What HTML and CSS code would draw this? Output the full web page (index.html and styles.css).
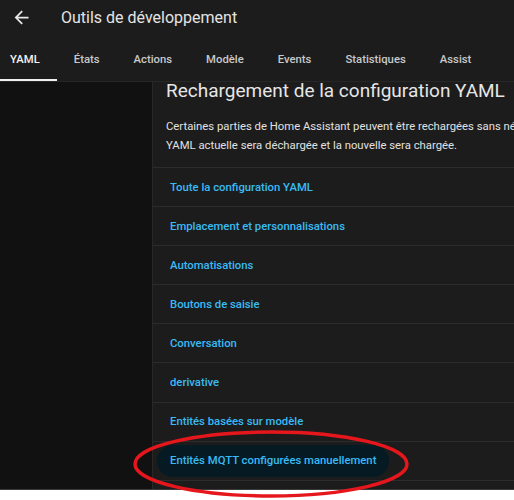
FILE: index.html
```html
<!DOCTYPE html>
<html lang="fr">
<head>
<meta charset="utf-8">
<title>Outils de développement</title>
<link rel="stylesheet" href="styles.css">
</head>
<body>
<div class="app">
  <header class="header">
    <div class="toolbar">
      <svg class="back" viewBox="0 0 24 24" width="21" height="21"><path fill="#e8e8e8" d="M20,11V13H8L13.5,18.5L12.08,19.92L4.16,12L12.08,4.08L13.5,5.5L8,11H20Z"/></svg>
      <div class="title">Outils de développement</div>
    </div>
    <nav class="tabs">
      <div class="tab active">YAML</div>
      <div class="tab">États</div>
      <div class="tab">Actions</div>
      <div class="tab">Modèle</div>
      <div class="tab">Events</div>
      <div class="tab">Statistiques</div>
      <div class="tab">Assist</div>
    </nav>
  </header>
  <div class="main">
    <aside class="side"></aside>
    <section class="card">
      <div class="card-head">
        <h1 class="heading">Rechargement de la configuration YAML</h1>
        <p class="desc"><span class="line">Certaines parties de Home Assistant peuvent être rechargées sans nécessiter de redémarrage. Cliquer sur recharger : la configuration</span><span class="line">YAML actuelle sera déchargée et la nouvelle sera chargée.</span></p>
      </div>
      <div class="row"><span class="btn">Toute la configuration YAML</span></div>
      <div class="row"><span class="btn">Emplacement et personnalisations</span></div>
      <div class="row"><span class="btn">Automatisations</span></div>
      <div class="row"><span class="btn">Boutons de saisie</span></div>
      <div class="row"><span class="btn">Conversation</span></div>
      <div class="row"><span class="btn">derivative</span></div>
      <div class="row"><span class="btn">Entités basées sur modèle</span></div>
      <div class="row"><span class="btn focus">Entités MQTT configurées manuellement</span></div>
    </section>
  </div>
</div>
<svg class="annot" viewBox="0 0 514 500" width="514" height="500"><ellipse cx="271" cy="464" rx="136" ry="32" fill="none" stroke="#e5161c" stroke-width="3.5"/></svg>
</body>
</html>
```

FILE: styles.css
```css
html, body {
  margin: 0;
  padding: 0;
}
body {
  background: #ffffff;
  font-family: Roboto, "Noto Sans", "Liberation Sans", sans-serif;
  width: 514px;
  height: 500px;
  overflow: hidden;
  position: relative;
}
.app {
  height: 489px;
  border-bottom: 1px solid #3a3a3a;
  background: #111111;
  display: flex;
  flex-direction: column;
  overflow: hidden;
}
.header {
  background: #1c1c1c;
  border-bottom: 1px solid #272727;
  flex: none;
}
.toolbar {
  height: 35px;
  display: flex;
  align-items: center;
  padding-left: 11px;
}
.back {
  display: block;
  margin-right: 29px;
}
.title {
  font-size: 16px;
  color: #e4e4e4;
  letter-spacing: 0;
}
.tabs {
  display: flex;
  height: 46px;
}
.tab {
  box-sizing: border-box;
  height: 46px;
  padding: 5px 17px 0;
  border-bottom: 2px solid transparent;
  display: flex;
  align-items: center;
  font-size: 11.3px;
  font-weight: 500;
  color: #c9c9c9;
  white-space: nowrap;
}
.tab:first-child {
  padding-left: 10px;
}
.tab.active {
  color: #f2f2f2;
  border-bottom-color: #f0f0f0;
}
.main {
  flex: 1;
  display: flex;
  min-height: 0;
}
.side {
  width: 152px;
  flex: none;
  background: #111111;
}
.card {
  width: 620px;
  flex: none;
  background: #1c1c1c;
  border-left: 1px solid #282828;
}
.card-head {
  padding: 0 13px 12px;
  border-bottom: 1px solid #2c2c2c;
}
.heading {
  margin: -3px 0 0;
  font-size: 19px;
  line-height: 24px;
  font-weight: 400;
  color: #e6e6e6;
  white-space: nowrap;
}
.desc {
  margin: 15px 0 0;
  font-size: 11.3px;
  line-height: 18.5px;
  color: #e1e1e1;
}
.line {
  display: block;
  white-space: nowrap;
}
.row {
  height: 38.1px;
  border-bottom: 1px solid #2c2c2c;
  display: flex;
  align-items: center;
  padding-left: 4px;
}
.btn {
  height: 32px;
  padding: 0 13px;
  border-radius: 16px;
  display: flex;
  align-items: center;
  font-size: 11.3px;
  font-weight: 500;
  color: #38bbf4;
  white-space: nowrap;
}
.btn.focus {
  background: #061a24;
}
.annot {
  position: absolute;
  left: 0;
  top: 0;
  pointer-events: none;
}
```
